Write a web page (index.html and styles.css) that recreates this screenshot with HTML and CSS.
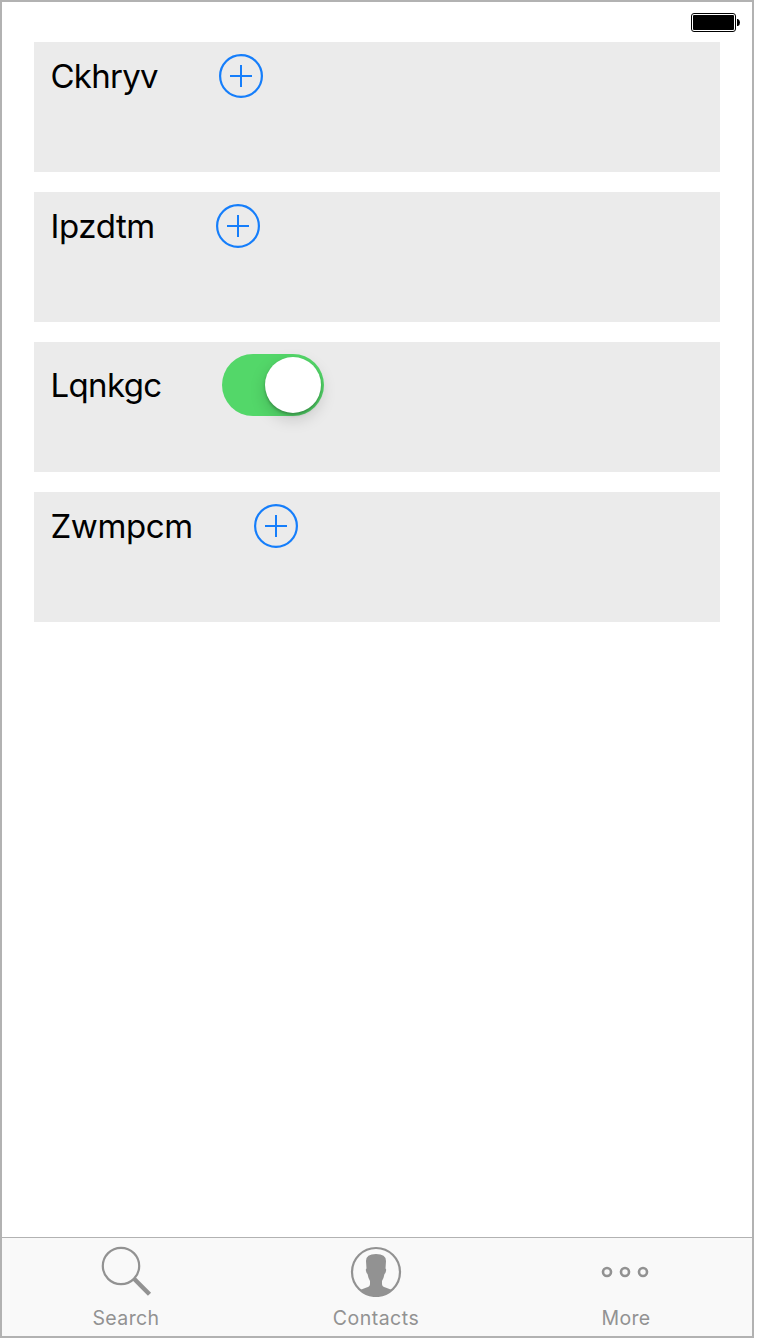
FILE: index.html
```html
<!DOCTYPE html>
<html lang="en">
<head>
<meta charset="utf-8">
<title>Settings</title>
<link rel="stylesheet" href="styles.css">
</head>
<body>
<div class="phone">
  <header class="status">
    <svg class="battery" width="50" height="20" viewBox="0 0 50 20">
      <rect x=".5" y=".5" width="44" height="18" rx="2.5" fill="#fff" stroke="#000"/>
      <rect x="2" y="2" width="41" height="15" rx="1" fill="#000"/>
      <path d="M46 6h1q2 1 2 3.500t-2 3.500h-1z" fill="#000"/>
    </svg>
  </header>
  <main class="list">
    <section class="row">
      <span class="label label-first">Ckhryv</span>
      <svg class="add" viewBox="0 0 44 44"><circle cx="22" cy="22" r="20.900"/><path d="M11 22h22M22 11v22"/></svg>
    </section>
    <section class="row">
      <span class="label label-second">Ipzdtm</span>
      <svg class="add" viewBox="0 0 44 44"><circle cx="22" cy="22" r="20.900"/><path d="M11 22h22M22 11v22"/></svg>
    </section>
    <section class="row">
      <span class="label label-third">Lqnkgc</span>
      <span class="switch"><span class="knob"></span></span>
    </section>
    <section class="row">
      <span class="label label-fourth">Zwmpcm</span>
      <svg class="add" viewBox="0 0 44 44"><circle cx="22" cy="22" r="20.900"/><path d="M11 22h22M22 11v22"/></svg>
    </section>
  </main>
  <nav class="tabs">
    <div class="tab">
      <svg class="icon" viewBox="0 0 52 52">
        <circle cx="21" cy="21" r="18.200" fill="none" stroke="#929292" stroke-width="2.2"/>
        <path d="M33.800 33.500L49.500 49.200" fill="none" stroke="#929292" stroke-width="4.400"/>
      </svg>
      <span class="caption search">Search</span>
    </div>
    <div class="tab">
      <svg class="icon" viewBox="0 0 52 52">
        <circle cx="26" cy="27" r="24" fill="none" stroke="#929292" stroke-width="2.2"/>
        <path d="M16 16Q16 12.500 18.500 10.800Q21 9 26 9Q31 9 33.500 10.800Q36 12.500 36 16L35.500 23.500Q36.500 24 36 26Q35.500 28.500 34.500 29Q33.800 33 32 36V39Q32 41.500 35.500 42.500L42 45Q35 51.500 26 51.500Q17 51.500 10 45L16.500 42.500Q20 41.500 20 39V36Q18.200 33 17.500 29Q16.500 28.500 16 26Q15.500 24 16.500 23.500Z" fill="#929292"/>
      </svg>
      <span class="caption contacts">Contacts</span>
    </div>
    <div class="tab">
      <svg class="icon" viewBox="0 0 52 52">
        <g fill="none" stroke="#929292" stroke-width="2.600"><circle cx="7" cy="27" r="4"/><circle cx="25" cy="27" r="4"/><circle cx="43" cy="27" r="4"/></g>
      </svg>
      <span class="caption more">More</span>
    </div>
  </nav>
</div>
</body>
</html>
```
FILE: styles.css
```css
* { box-sizing: border-box; }
body { margin: 0; background: #fff; font-family: Inter, "Liberation Sans", sans-serif; }
.phone { width: 754px; height: 1338px; border: 2px solid #b2b2b2; display: flex; flex-direction: column; }
.status { height: 40px; padding: 11px 11px 0 0; display: flex; justify-content: flex-end; align-items: flex-start; }
.battery { display: block; }
.list { flex: 1; display: flex; flex-direction: column; gap: 20px; padding: 0 32px; }
.row { height: 130px; background: #ebebeb; padding: 12px 16px; display: flex; align-items: flex-start; }
.label { height: 44px; line-height: 44px; font-size: 33px; white-space: nowrap; color: #000; padding-left: .5px; }
.label-first { width: 169px; letter-spacing: -.75px; }
.label-second { width: 166px; letter-spacing: -.4px; }
.label-third { width: 172px; height: 62px; line-height: 62px; letter-spacing: -.65px; }
.label-fourth { width: 204px; letter-spacing: -.4px; }
.add { width: 44px; height: 44px; fill: none; stroke: #157efb; stroke-width: 2; }
.add circle { stroke-width: 2.2; }
.switch { width: 102px; height: 62px; border-radius: 31px; background: #53d769; display: flex; justify-content: flex-end; padding: 3px; }
.knob { width: 56px; height: 56px; border-radius: 50%; background: #fff; box-shadow: 0 2px 3px rgba(0,0,0,.25), 0 6px 16px rgba(0,0,0,.17); }
.tabs { height: 99px; background: #f9f9f9; border-top: 1px solid #b2b2b2; display: grid; grid-template-columns: repeat(3, 1fr); padding: 7px 2px 0 0; margin-right: 0; }
.tab { display: flex; flex-direction: column; align-items: center; color: #929292; width: 248px; }
.tabs { grid-template-columns: repeat(3, 250px); }
.icon { width: 52px; height: 52px; }
.caption { font-size: 19.5px; line-height: 24px; margin-top: 9px; letter-spacing: .5px; }
.search { letter-spacing: .4px; }
.more { letter-spacing: .35px; }
```
